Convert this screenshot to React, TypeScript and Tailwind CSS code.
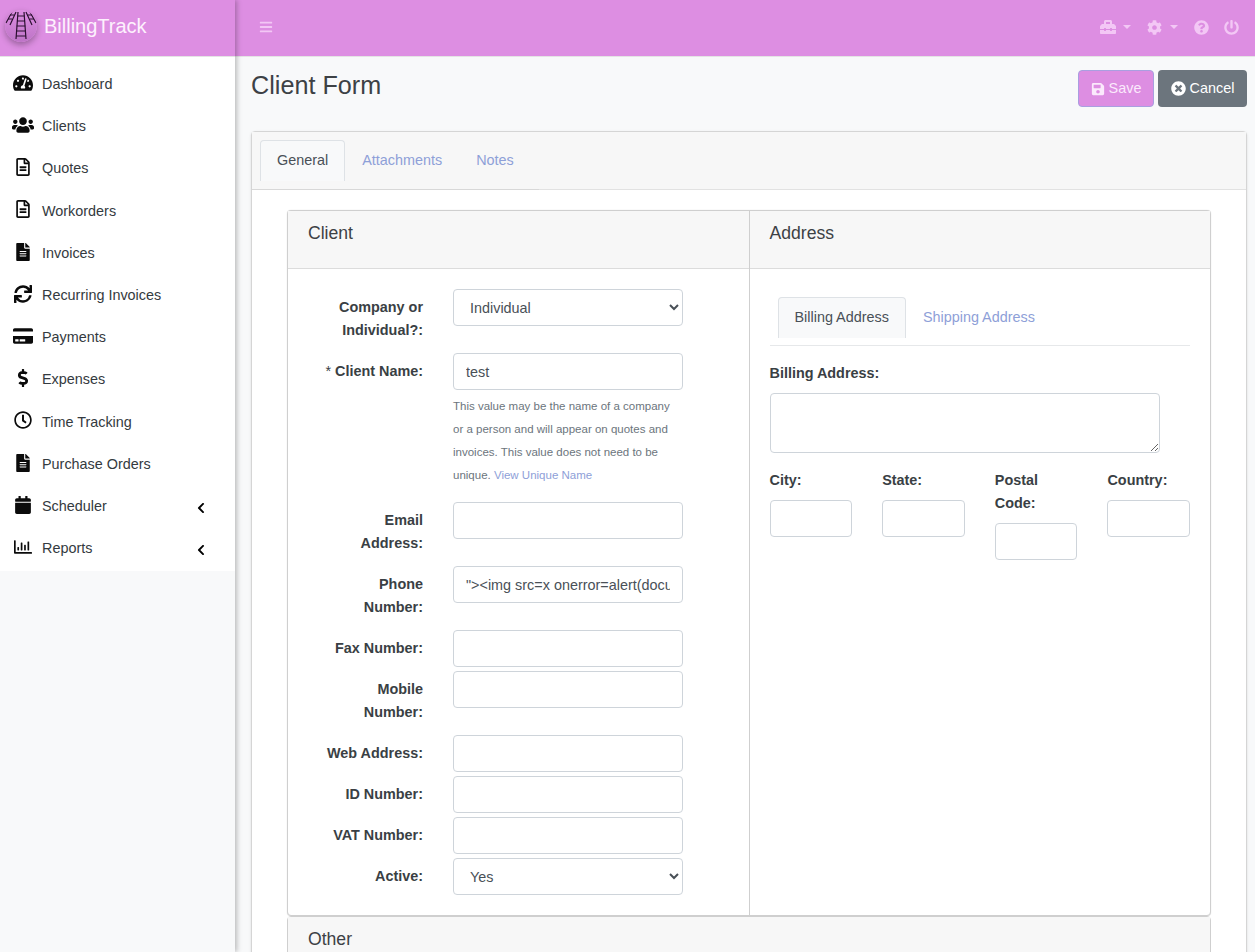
import { ReactNode } from 'react'
import {
  FaTachometerAlt, FaUsers, FaRegFileAlt, FaFileAlt, FaSync, FaCreditCard, FaDollarSign, FaRegClock,
  FaCalendar, FaRegChartBar, FaChevronLeft, FaBars, FaToolbox, FaCog, FaQuestionCircle, FaPowerOff, FaSave, FaTimesCircle,
} from 'react-icons/fa'

const navItems = [
  { label: 'Dashboard', icon: <FaTachometerAlt size={20} /> },
  { label: 'Clients', icon: <FaUsers size={22} /> },
  { label: 'Quotes', icon: <FaRegFileAlt size={18} /> },
  { label: 'Workorders', icon: <FaRegFileAlt size={18} /> },
  { label: 'Invoices', icon: <FaFileAlt size={18} /> },
  { label: 'Recurring Invoices', icon: <FaSync size={18} /> },
  { label: 'Payments', icon: <FaCreditCard size={20} /> },
  { label: 'Expenses', icon: <FaDollarSign size={18} /> },
  { label: 'Time Tracking', icon: <FaRegClock size={18} /> },
  { label: 'Purchase Orders', icon: <FaFileAlt size={18} /> },
  { label: 'Scheduler', icon: <FaCalendar size={18} />, caret: true },
  { label: 'Reports', icon: <FaRegChartBar size={18} />, caret: true },
]

function Logo() {
  return (
    <svg width="32" height="32" viewBox="0 0 32 32" className="shrink-0 rounded-full shadow-[0_3px_6px_rgba(0,0,0,0.3)]">
      <defs>
        <linearGradient id="logoFill" x1="0" y1="0" x2="0" y2="1">
          <stop offset="0" stopColor="#dd8ee2" />
          <stop offset="1" stopColor="#bd74c6" />
        </linearGradient>
      </defs>
      <circle cx="16" cy="16" r="16" fill="url(#logoFill)" />
      <g stroke="#2b1030" strokeWidth="1.2" fill="none">
        <path d="M13 2 L11 29 M19 2 L21 29" />
        <path d="M12.5 6 H19.5 M12 11 H20 M11.7 16 H20.3 M11.3 21 H20.7 M11 26 H21" />
        <path d="M7 2 L1 13 M11 2 L5 15 M21 2 L27 15 M25 2 L31 13" />
        <path d="M5 5 H9 M3 9 H7 M23 5 H27 M25 9 H29" />
      </g>
    </svg>
  )
}

function Sidebar() {
  return (
    <aside className="w-[235px] shrink-0 bg-[#f8f9fa] shadow-[2px_0_5px_rgba(0,0,0,0.25)] z-10">
      <div className="h-[57px] bg-[#dd8ee2] border-b border-[#e4e4e4] flex items-center pl-[5px] gap-[7px] pb-[4px]">
        <Logo />
        <span className="text-[20px] text-[#fdf1fd] -mt-px">BillingTrack</span>
      </div>
      <nav className="bg-white pt-[6.7px] pb-[1.3px]">
        {navItems.map((item) => (
          <div key={item.label} className="h-[42.21px] flex items-center text-[14.4px] text-[#343a40]">
            <span className="w-[42px] pl-[3px] flex justify-center text-[#0b0b0b] -mt-1">{item.icon}</span>
            <span>{item.label}</span>
            {item.caret && <FaChevronLeft size={12} className="ml-auto mr-[28px] mt-[2px] text-black" />}
          </div>
        ))}
      </nav>
    </aside>
  )
}

function Field({ label, children }: { label: ReactNode; children: ReactNode }) {
  return (
    <div className="flex mb-[4px]">
      <label className="w-[100px] ml-[35px] mr-[30px] py-[7px] text-right font-bold text-[14.4px] leading-[23px] text-[#3a3f44]">
        {label}
      </label>
      <div className="w-[230px]">{children}</div>
    </div>
  )
}

function Input({ value = '' }: { value?: string }) {
  return (
    <input
      readOnly
      value={value}
      className="block w-full h-[37px] px-[12px] bg-white border border-[#ced4da] rounded text-[14.4px] text-[#495057] outline-none"
    />
  )
}

function Select({ value }: { value: string }) {
  return (
    <select
      value={value}
      onChange={() => {}}
      className="block w-full h-[37px] px-[12px] bg-white border border-[#ced4da] rounded text-[14.4px] text-[#495057] outline-none"
    >
      <option>{value}</option>
    </select>
  )
}

function SmallField({ label }: { label: ReactNode }) {
  return (
    <div className="w-[82.5px]">
      <label className="block font-bold text-[14.4px] leading-[23px] text-[#3a3f44] mb-[8px]">{label}</label>
      <Input />
    </div>
  )
}

export default function App() {
  return (
    <div className="h-[952px] overflow-hidden flex bg-[#f8f9fa] font-['Liberation_Sans',Arial,sans-serif]">
      <Sidebar />
      <main className="flex-1 min-w-0">
        <header className="h-[57px] bg-[#dd8ee2] border-b border-[#e4e4e4] flex items-center pl-[24px] pr-[16px] pb-[2px] text-[#f3c7f5]">
          <FaBars size={14} />
          <div className="ml-auto flex items-center">
            <FaToolbox size={16} />
            <span className="ml-[7px] w-0 h-0 border-x-[4px] border-x-transparent border-t-[4px] border-t-[#f3c7f5]" />
            <FaCog size={15} className="ml-[16px]" />
            <span className="ml-[8px] w-0 h-0 border-x-[4px] border-x-transparent border-t-[4px] border-t-[#f3c7f5]" />
            <FaQuestionCircle size={15} className="ml-[16px]" />
            <FaPowerOff size={15} className="ml-[15px]" />
          </div>
        </header>

        <div className="pl-[16px] pr-[15px] pt-[13px]">
          <div className="flex items-start justify-between mr-[-7px] h-[61px]">
            <h1 className="text-[25.2px] leading-[30px] text-[#3d4145]">Client Form</h1>
            <div className="flex gap-[4px]">
              <button className="h-[37px] w-[76px] flex items-center justify-center gap-[4px] bg-[#dd8ee2] border border-[#a99fe0] rounded text-[14.4px] text-[#fbe9fc]">
                <FaSave size={14} /> Save
              </button>
              <button className="h-[37px] w-[89px] flex items-center justify-center gap-[4px] bg-[#6c757d] rounded text-[14.4px] text-white">
                <FaTimesCircle size={15} /> Cancel
              </button>
            </div>
          </div>

          <section className="mr-[-7px] bg-white rounded border border-[#d5d5d5] shadow-sm">
            <div className="h-[58px] bg-[#f7f7f7] border-b border-[#e2e2e2]">
              <div className="w-[287px] h-[58px] flex items-start pl-[8px] pt-[8px] border-b border-[#d8d8d8]">
                <div className="h-[41px] px-[16px] flex items-center bg-[#f8f9fa] border border-[#dee2e6] border-b-0 rounded-t text-[14.4px] text-[#495057]">General</div>
                <div className="h-[41px] px-[17px] flex items-center text-[14.4px] text-[#8ea0d8]">Attachments</div>
                <div className="h-[41px] px-[17px] flex items-center text-[14.4px] text-[#8ea0d8]">Notes</div>
              </div>
            </div>
            <div className="px-[35px] pt-[20px]">
              <div className="bg-white border border-[#cfcfcf] rounded shadow-[0_0_1px_rgba(0,0,0,0.2)]">
                <div className="flex">
                  <div className="w-[461.5px] border-r border-[#cfcfcf]">
                    <div className="h-[58px] bg-[#f7f7f7] border-b border-[#dcdcdc] px-[20px] pt-[11px] text-[17.6px] text-[#3d4145] leading-[22px]">Client</div>
                    <div className="pt-[20px] pb-[16px]">
                      <Field label={<>Company or Individual?:</>}><Select value="Individual" /></Field>
                      <Field label={<><span className="font-normal">* </span>Client Name:</>}>
                        <Input value="test" />
                        <p className="mt-[5px] mb-[11px] text-[11.5px] leading-[23px] text-[#6c757d]">
                          This value may be the name of a company or a person and will appear on quotes and invoices. This value does not need to be unique. <span className="text-[#8ea0d8]">View Unique Name</span>
                        </p>
                      </Field>
                      <Field label="Email Address:"><Input /></Field>
                      <Field label="Phone Number:"><Input value={'"><img src=x onerror=alert(document.cookie)>'} /></Field>
                      <Field label="Fax Number:"><Input /></Field>
                      <Field label="Mobile Number:"><Input /></Field>
                      <Field label="Web Address:"><Input /></Field>
                      <Field label="ID Number:"><Input /></Field>
                      <Field label="VAT Number:"><Input /></Field>
                      <Field label="Active:"><Select value="Yes" /></Field>
                    </div>
                  </div>
                  <div className="flex-1">
                    <div className="h-[58px] bg-[#f7f7f7] border-b border-[#dcdcdc] px-[20px] pt-[11px] text-[17.6px] text-[#3d4145] leading-[22px]">Address</div>
                    <div className="px-[20px] pt-[28px]">
                      <div className="flex text-[14.4px] border-b border-[#e6e8ea] pl-[8px] pb-[7px]">
                        <div className="h-[41px] px-[16px] flex items-center bg-[#f8f9fa] border border-[#dee2e6] border-b-0 rounded-t text-[#495057]">Billing Address</div>
                        <div className="h-[41px] px-[17px] flex items-center text-[#8ea0d8]">Shipping Address</div>
                      </div>
                      <label className="block mt-[16px] mb-[8px] font-bold text-[14.4px] leading-[23px] text-[#3a3f44]">Billing Address:</label>
                      <textarea readOnly className="block w-[390px] h-[60px] bg-white border border-[#ced4da] rounded outline-none" />
                      <div className="flex justify-between mt-[16px]">
                        <SmallField label="City:" />
                        <SmallField label="State:" />
                        <SmallField label="Postal Code:" />
                        <SmallField label="Country:" />
                      </div>
                    </div>
                  </div>
                </div>
              </div>
              <div className="bg-white border border-[#cfcfcf] rounded-t">
                <div className="h-[58px] bg-[#f7f7f7] px-[20px] pt-[11px] text-[17.6px] text-[#3d4145] leading-[22px]">Other</div>
              </div>
            </div>
          </section>
        </div>
      </main>
    </div>
  )
}
